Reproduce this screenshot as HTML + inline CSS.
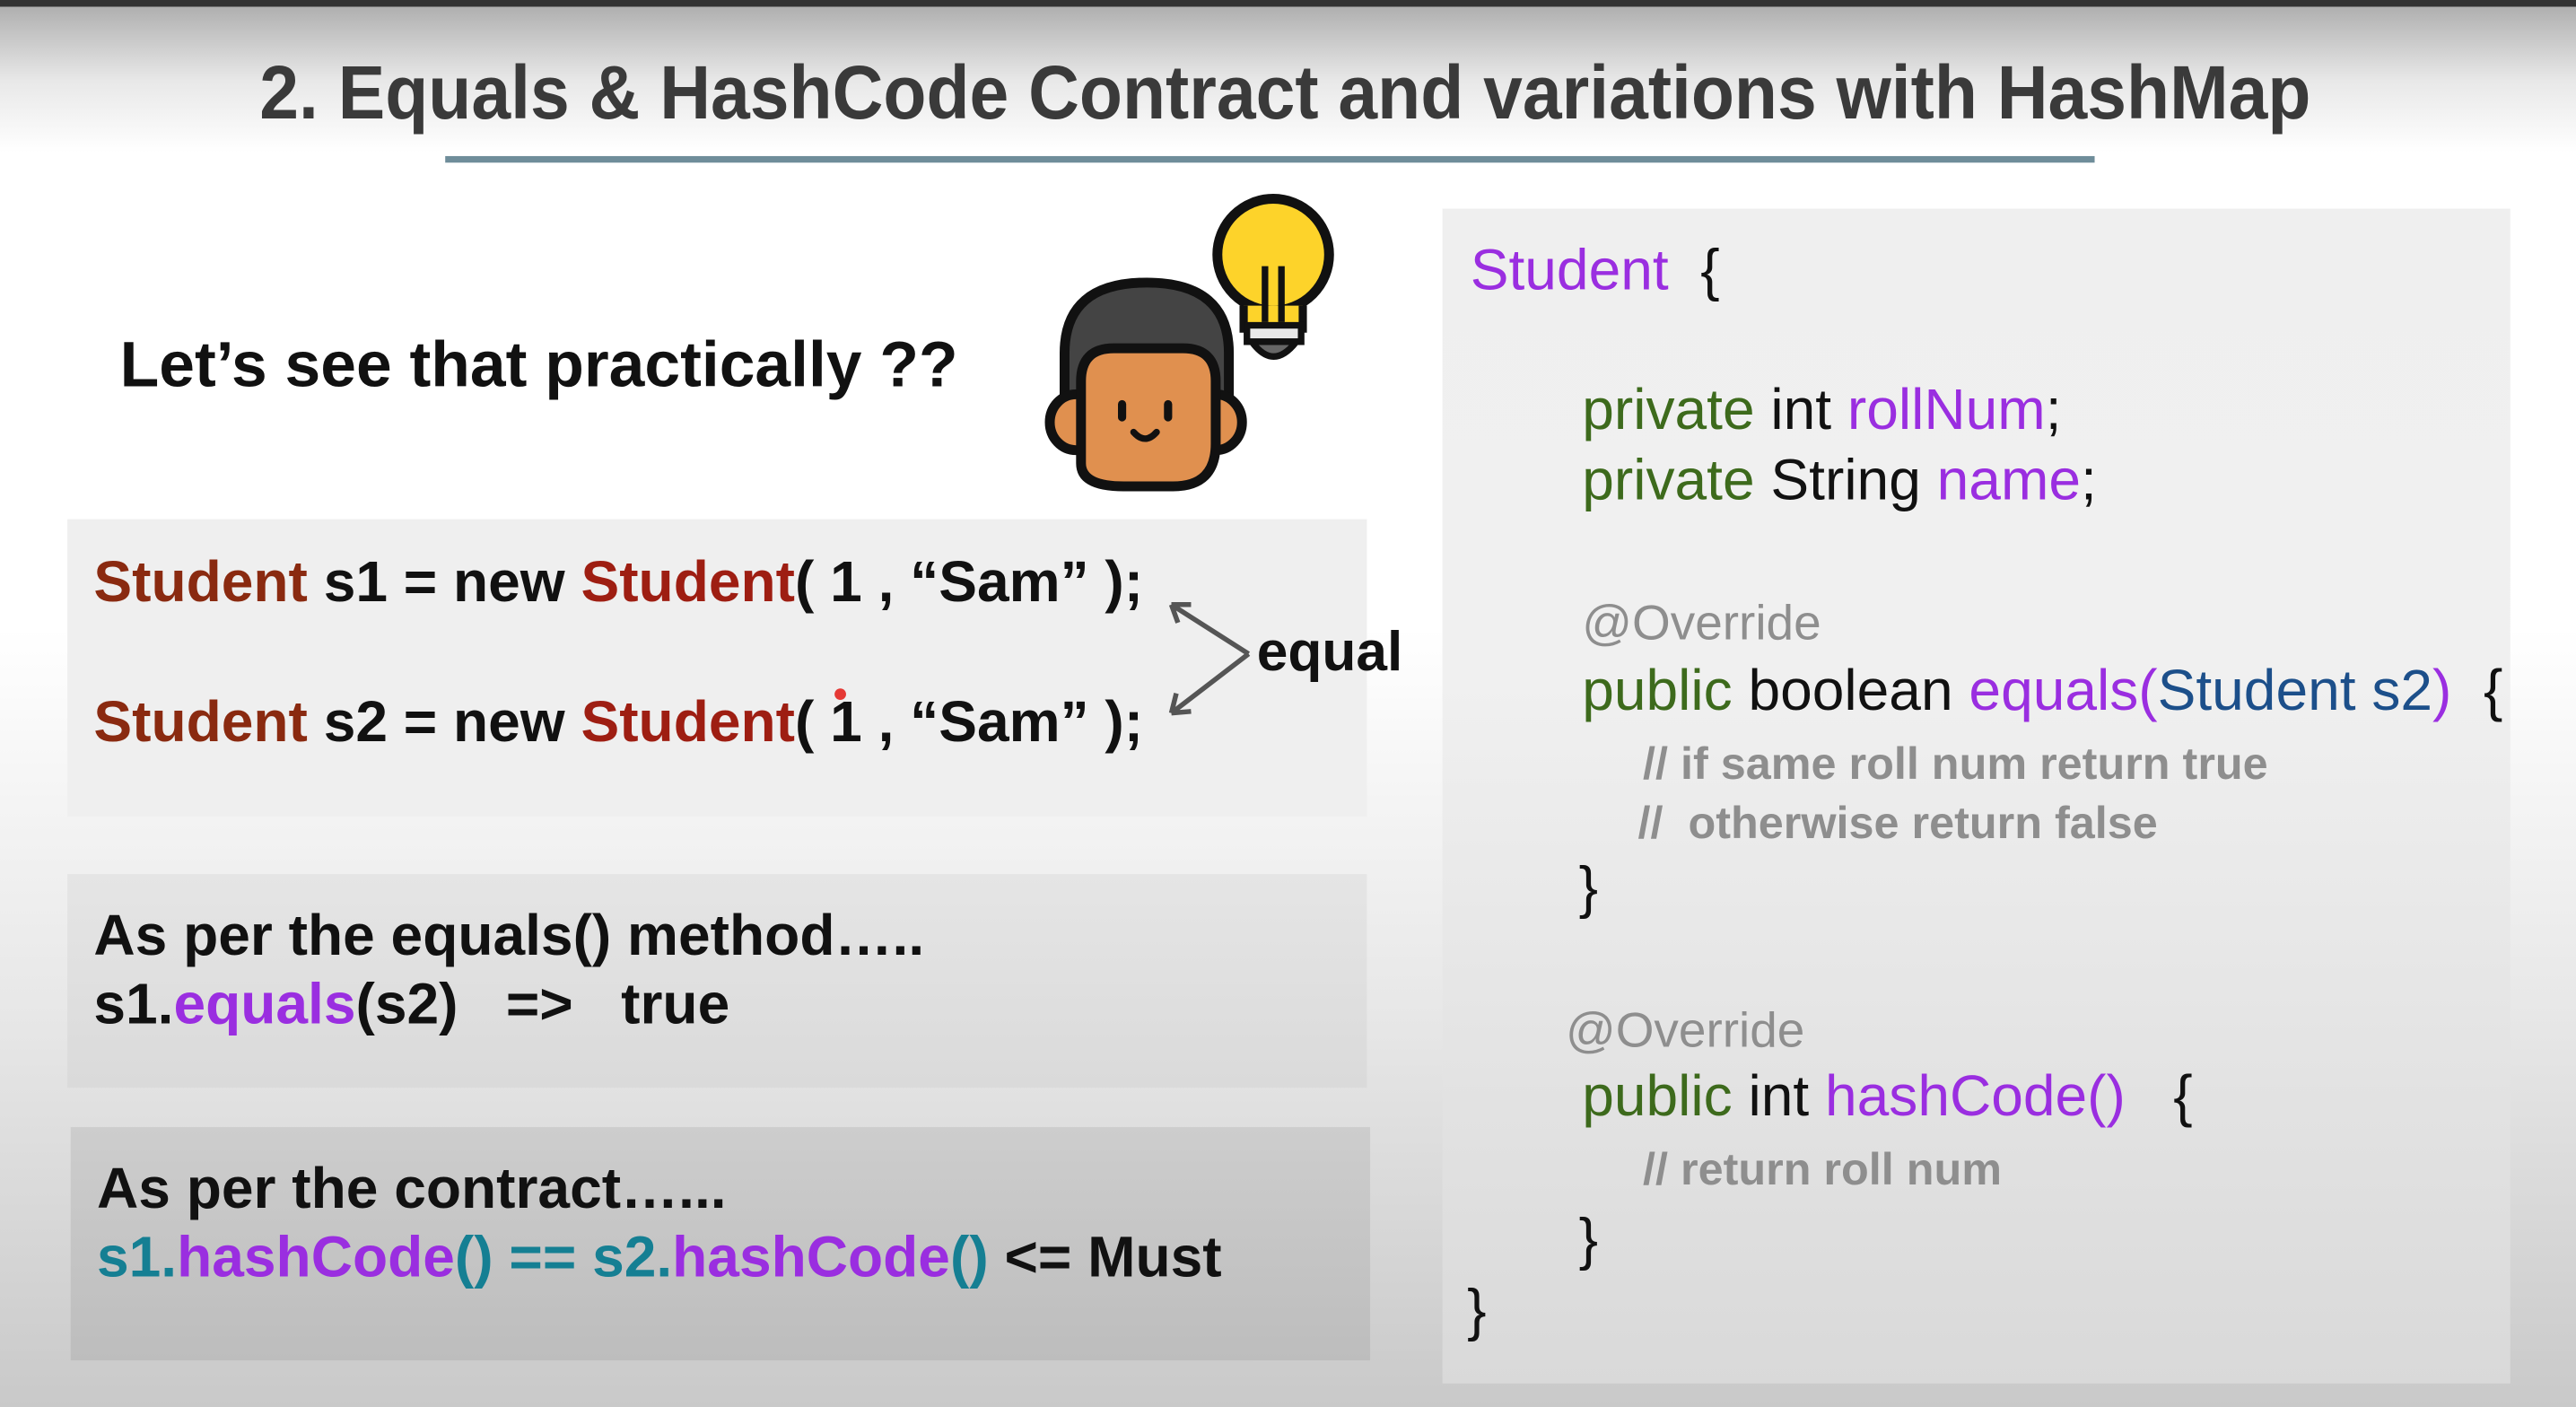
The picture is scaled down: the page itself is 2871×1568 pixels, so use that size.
<!DOCTYPE html>
<html><head><meta charset="utf-8"><style>
html,body{margin:0;padding:0;}
body{width:2871px;height:1568px;overflow:hidden;position:relative;
background:linear-gradient(180deg,#333 0,#333 7px,#b0b0b0 8px,#e8e8e8 90px,#fff 170px,#fff 700px,#e6e6e6 1150px,#c9c9c9 1568px);}
#s{position:absolute;left:0;top:0;width:1568px;height:856px;transform:scale(1.831);transform-origin:0 0;font-family:"Liberation Sans",Arial,sans-serif;}
.a{position:absolute;white-space:nowrap;line-height:1;}
.box{position:absolute;}
.b{font-weight:bold;}
.red{color:#8a2a10}.red2{color:#9e1e12}.pur{color:#9a2ee0}.grn{color:#3d6a1c}.gry{color:#8e8e8e}.teal{color:#157f93}.blu{color:#1c4f8a}
</style></head><body><div id="s">
<div class="a b" style="left:158px;top:33px;font-size:46px;color:#3a3a3a;transform:scaleX(0.934);transform-origin:0 0;">2. Equals &amp; HashCode Contract and variations with HashMap</div>
<div class="box" style="left:271px;top:95px;width:1004px;height:4px;background:#6f8d9a"></div>

<div class="box" style="left:878px;top:127px;width:650px;height:715px;background:linear-gradient(180deg,#efefef,#f0f0f0 40%,#d9d9d9)"></div>
<div class="box" style="left:41px;top:316px;width:791px;height:181px;background:#efefef"></div>
<div class="box" style="left:41px;top:532px;width:791px;height:130px;background:linear-gradient(180deg,#e5e5e5,#dadada)"></div>
<div class="box" style="left:43px;top:686px;width:791px;height:142px;background:linear-gradient(180deg,#cdcdcd,#bdbdbd)"></div>

<div class="a b" style="left:73px;top:203px;font-size:39px;color:#111">Let’s see that practically ??</div>

<svg style="position:absolute;left:630px;top:112px" width="190" height="192" viewBox="630 112 190 192">
 <circle cx="775" cy="155" r="34" fill="#fdd32a" stroke="#111" stroke-width="6"/>
 <path d="M757 186 L757 200 L793 200 L793 186" fill="#fdd32a" stroke="#111" stroke-width="5"/>
 <rect x="759" y="198" width="33" height="10" fill="#e8e8e8" stroke="#111" stroke-width="4"/>
 <path d="M762 208 Q775 226 789 208 Z" fill="#666" stroke="#111" stroke-width="4"/>
 <path d="M770 196 L770 162 M780 196 L780 162" stroke="#111" stroke-width="4"/>
 <path d="M648 255 L648 215 Q648 172 698 172 Q748 172 748 215 L748 255 Z" fill="#444" stroke="#111" stroke-width="6"/>
 <ellipse cx="655" cy="257" rx="16" ry="17" fill="#e0904f" stroke="#111" stroke-width="6"/>
 <ellipse cx="740" cy="257" rx="16" ry="17" fill="#e0904f" stroke="#111" stroke-width="6"/>
 <path d="M658 282 L658 232 Q658 212 678 212 L720 212 Q740 212 740 232 L740 270 Q740 296 714 296 L684 296 Q658 296 658 282 Z" fill="#e0904f" stroke="#111" stroke-width="6"/>
 <path d="M683 246 L683 254 M711 246 L711 254" stroke="#111" stroke-width="5" stroke-linecap="round"/>
 <path d="M690 263 Q697 271 704 263" fill="none" stroke="#111" stroke-width="4" stroke-linecap="round"/>
</svg>

<div class="a b" style="left:57px;top:337px;font-size:35px;color:#111"><span class="red">Student</span> s1 = new <span class="red2">Student</span>( 1 , “Sam” );</div>
<div class="a b" style="left:57px;top:422px;font-size:35px;color:#111"><span class="red">Student</span> s2 = new <span class="red2">Student</span>( 1 , “Sam” );</div>
<div class="box" style="left:508px;top:419px;width:7px;height:7px;border-radius:50%;background:#e53935"></div>
<svg style="position:absolute;left:705px;top:362px" width="60" height="78" viewBox="0 0 60 78">
 <path d="M55 36 L8 6 M8 6 L12 17 M8 6 L20 6 M55 36 L8 72 M8 72 L20 71 M8 72 L11 60" stroke="#555" stroke-width="3" fill="none"/>
</svg>
<div class="a b" style="left:765px;top:380px;font-size:34px;color:#111">equal</div>

<div class="a b" style="left:57px;top:552px;font-size:35px;color:#111">As per the equals() method…..</div>
<div class="a b" style="left:57px;top:594px;font-size:35px;color:#111">s1.<span class="pur">equals</span>(s2) &nbsp;&nbsp;=&gt; &nbsp;&nbsp;true</div>
<div class="a b" style="left:59px;top:706px;font-size:35px;color:#111">As per the contract…...</div>
<div class="a b" style="left:59px;top:748px;font-size:35px;color:#111"><span class="teal">s1.</span><span class="pur">hashCode</span><span class="teal">() == s2.</span><span class="pur">hashCode</span><span class="teal">()</span> &lt;= Must</div>

<div class="a" style="left:895px;top:147px;font-size:35px;color:#111"><span class="pur">Student</span> &nbsp;{</div>
<div class="a" style="left:963px;top:232px;font-size:35px;color:#111"><span class="grn">private</span> int <span class="pur">rollNum</span>;</div>
<div class="a" style="left:963px;top:275px;font-size:35px;color:#111"><span class="grn">private</span> String <span class="pur">name</span>;</div>
<div class="a gry" style="left:963px;top:365px;font-size:30px">@Override</div>
<div class="a" style="left:963px;top:403px;font-size:35px;color:#111"><span class="grn">public</span> boolean <span class="pur">equals(</span><span class="blu">Student s2</span><span class="pur">)</span> &nbsp;{</div>
<div class="a b gry" style="left:1000px;top:451px;font-size:27.5px">// if same roll num return true</div>
<div class="a b gry" style="left:997px;top:487px;font-size:27.5px">// &nbsp;otherwise return false</div>
<div class="a" style="left:961px;top:523px;font-size:35px;color:#111">}</div>
<div class="a gry" style="left:953px;top:613px;font-size:30px">@Override</div>
<div class="a" style="left:963px;top:650px;font-size:35px;color:#111"><span class="grn">public</span> int <span class="pur">hashCode()</span> &nbsp;&nbsp;{</div>
<div class="a b gry" style="left:1000px;top:698px;font-size:27.5px">// return roll num</div>
<div class="a" style="left:961px;top:737px;font-size:35px;color:#111">}</div>
<div class="a" style="left:893px;top:780px;font-size:35px;color:#111">}</div>
</div></body></html>
